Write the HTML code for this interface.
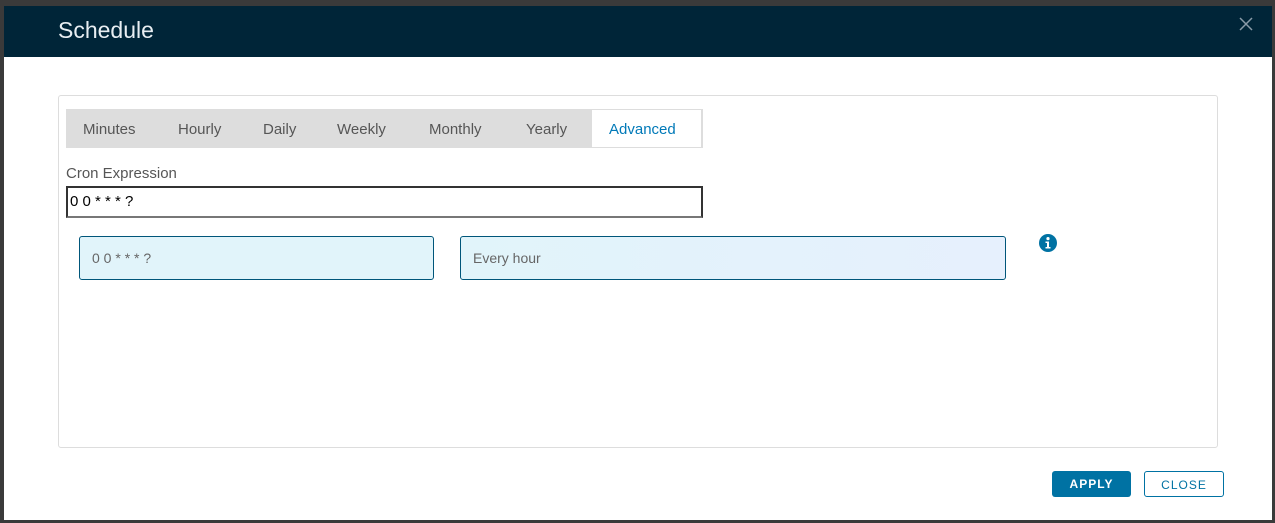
<!DOCTYPE html>
<html><head><style>
body{margin:0;width:1275px;height:523px;background:#3a3a3a;position:relative;overflow:hidden;font-family:"Liberation Sans",sans-serif}
.modal{position:absolute;left:4px;top:6px;width:1268px;height:514px;background:#fff}
.hdr{position:absolute;left:0;top:0;width:100%;height:51px;background:#002538}
.hdr .t{position:absolute;left:54px;top:11px;font-size:23px;color:#e8eef2}
.x{position:absolute;left:1234px;top:10px}
.panel{position:absolute;left:54px;top:89px;width:1158px;height:351px;border:1px solid #ddd;border-radius:3px}
.tabs{position:absolute;left:62px;top:103px;width:637px;height:39px;background:#ddd}
.tab{position:absolute;top:12px;font-size:15px;color:#565656}
.act{position:absolute;left:526px;top:1px;width:109px;height:37px;background:#fff}
.lbl{position:absolute;left:62px;top:159px;font-size:15px;color:#565656}
.inp{position:absolute;left:62px;top:180px;width:631px;height:28px;border:2px solid #333;border-bottom-color:#777;font-size:15px;line-height:28px;padding-left:2px;box-sizing:content-box}
.box{position:absolute;top:230px;height:44px;background:#e1f4fa;border:1px solid #00567a;border-radius:3px;font-size:14px;color:#666;line-height:42px;padding-left:12px;box-sizing:border-box}
.btn{position:absolute;top:465px;height:26px;border-radius:3px;font-size:12px;font-weight:bold;letter-spacing:1px;text-align:center;line-height:26px;box-sizing:border-box}
</style></head><body>
<div class="modal">
<div class="hdr"><div class="t">Schedule</div>
<svg class="x" width="16" height="16"><path d="M2 2L14 14M14 2L2 14" stroke="#8a9ba8" stroke-width="1.5"/></svg></div>
<div class="panel"></div>
<div class="tabs"><div class="act"></div>
<span class="tab" style="left:17px">Minutes</span>
<span class="tab" style="left:112px">Hourly</span>
<span class="tab" style="left:197px">Daily</span>
<span class="tab" style="left:271px">Weekly</span>
<span class="tab" style="left:363px">Monthly</span>
<span class="tab" style="left:460px">Yearly</span>
<span class="tab" style="left:543px;color:#0079b8">Advanced</span>
</div>
<div class="lbl">Cron Expression</div>
<div class="inp">0 0 * * * ?</div>
<div class="box" style="left:75px;width:355px">0 0 * * * ?</div>
<div class="box" style="left:456px;width:546px;background:linear-gradient(90deg,#e1f4fa,#e6f0fd)">Every hour</div>
<svg style="position:absolute;left:1035px;top:228px" width="18" height="18"><circle cx="9" cy="9" r="9" fill="#0072a3"/><circle cx="9" cy="4.6" r="1.6" fill="#fff"/><path d="M6.5 7.5h3.5v5.5h1.5v1.5h-5v-1.5h1.5v-4h-1.5z" fill="#fff"/></svg>
<div class="btn" style="left:1048px;width:79px;background:#0072a3;color:#fff">APPLY</div>
<div class="btn" style="left:1140px;width:80px;border:1px solid #0072a3;color:#0072a3;font-weight:normal">CLOSE</div>
</div>
</body></html>
